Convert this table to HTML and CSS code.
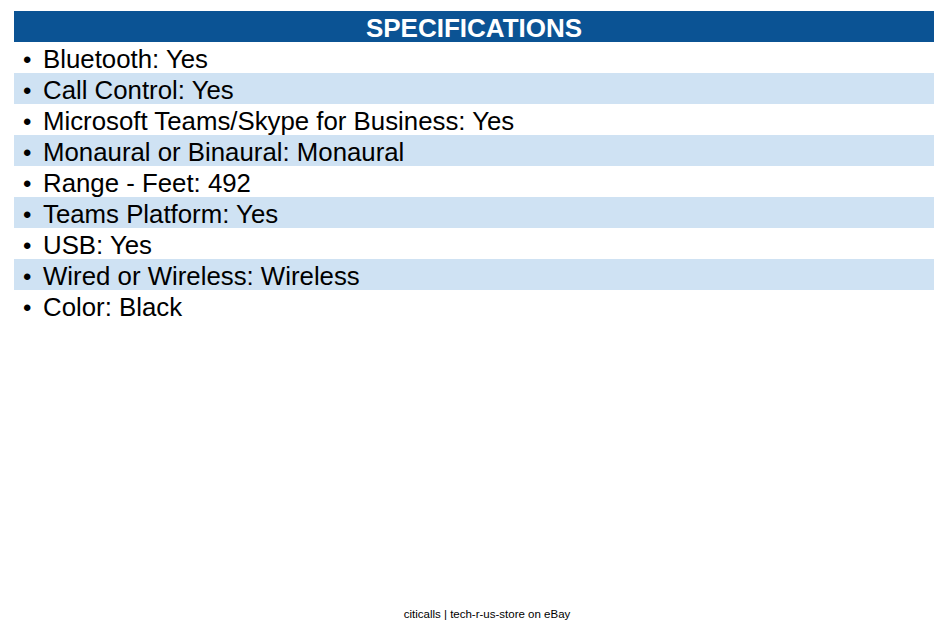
FILE: index.html
```html
<!DOCTYPE html>
<html>
<head>
<meta charset="utf-8">
<link rel="stylesheet" href="styles.css">
</head>
<body>
<div class="page">
  <div class="specs">
    <div class="specs-title">SPECIFICATIONS</div>
    <ul class="spec-list">
      <li>Bluetooth: Yes</li>
      <li class="alt">Call Control: Yes</li>
      <li>Microsoft Teams/Skype for Business: Yes</li>
      <li class="alt">Monaural or Binaural: Monaural</li>
      <li>Range - Feet: 492</li>
      <li class="alt">Teams Platform: Yes</li>
      <li>USB: Yes</li>
      <li class="alt">Wired or Wireless: Wireless</li>
      <li>Color: Black</li>
    </ul>
  </div>
  <div class="footer">citicalls | tech-r-us-store on eBay</div>
</div>
</body>
</html>
```
FILE: styles.css
```css
html, body {
  margin: 0;
  padding: 0;
  background: #ffffff;
}
.page {
  box-sizing: border-box;
  min-height: 634px;
  display: flex;
  flex-direction: column;
  padding: 11px 14px 14px 14px;
  font-family: "Liberation Sans", Arial, sans-serif;
  color: #000;
}
.specs {
  width: 920px;
}
.specs-title {
  background: #0b5394;
  color: #fff;
  font-weight: bold;
  font-size: 26px;
  height: 31px;
  line-height: 34px;
  text-align: center;
  overflow: hidden;
}
.spec-list {
  list-style: none;
  margin: 0;
  padding: 0;
}
.spec-list li {
  position: relative;
  height: 31px;
  line-height: 35px;
  font-size: 25.8px;
  padding-left: 29px;
}
.spec-list li::before {
  content: "\2022";
  position: absolute;
  left: 9px;
  top: 0;
  font-size: 24px;
}
.spec-list li.alt {
  background: #cfe2f3;
}
.footer {
  margin-top: auto;
  font-size: 11.5px;
  text-align: center;
  padding-left: 13px;
  width: 920px;
}
```
